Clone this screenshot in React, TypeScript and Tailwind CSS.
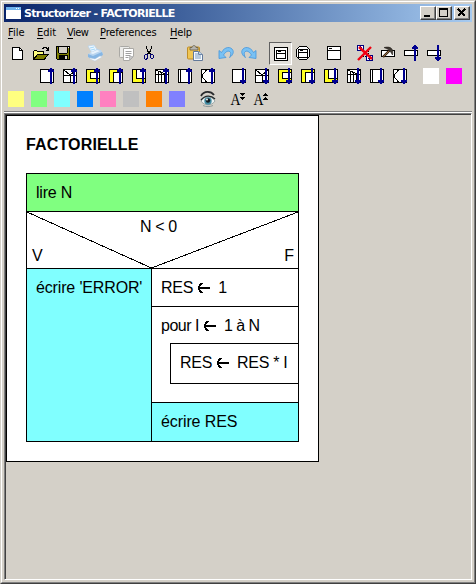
import React from "react";

function Icon({ children, crisp = true }: { children?: React.ReactNode; crisp?: boolean }) {
  return (
    <svg
      width="16"
      height="16"
      viewBox="0 0 16 16"
      fill="none"
      className="block shrink-0 overflow-visible"
      shapeRendering={crisp ? "crispEdges" : "auto"}
    >
      {children}
    </svg>
  );
}

const Gap = ({ children }: { children?: React.ReactNode }) => <span className="w-[8px] shrink-0">{children}</span>;
const Cells = ({ children }: { children: React.ReactNode }) => <div className="flex shrink-0 gap-[7px] pr-[7px]">{children}</div>;

function NewIcon() {
  return (
    <Icon>
      <path d="M2.500 2.500h7l3 3v9h-10z" fill="#fff" stroke="#000" />
      <path d="M9.500 2.500v3h3" stroke="#000" />
    </Icon>
  );
}

function OpenIcon() {
  return (
    <Icon>
      <path d="M.5 14V6.500l1-1h2l1 1h6v3" fill="#ffff80" stroke="#000" />
      <path d="M.5 14.500l4-5h11l-4.500 5z" fill="#808000" stroke="#000" />
      <path d="M9 3.500h1v-1h3v1h1v1h1M15.500 2v4M12.500 5.500h3" stroke="#000" />
    </Icon>
  );
}

function SaveIcon() {
  return (
    <Icon>
      <path d="M.5 1.500h13v13h-12l-1-1z" fill="#808000" stroke="#000" />
      <path d="M3 2h8v6H3z" fill="#d4d0c8" />
      <path d="M2.500 2v5.500l1 1h7l1-1V2" stroke="#000" />
      <path d="M3 10h9v4H3z" fill="#000" />
      <path d="M9 11h2v3H9z" fill="#d4d0c8" />
      <path d="M12 2h1v1h-1z" fill="#fff" />
    </Icon>
  );
}

function PrintIcon() {
  return (
    <Icon crisp={false}>
      <path d="M1 1l6-1 4 6-6 2z" fill="#eef7ff" stroke="#b5d3ec" strokeWidth=".7" />
      <path d="M3 3l4-1M4 5l4-1" stroke="#a1d8fa" />
      <path d="M1 9l9-5 4 1 2 4-9 5-6-2z" fill="#b9d5f0" />
      <path d="M1 9l5 2 9-4 1 3-9 5-6-3z" fill="#86b6e4" />
      <path d="M3 8l7-3 3 1-7 3z" fill="#e8f3fc" />
      <path d="M3 13l5 1 5-3 2 1-7 4-5-2z" fill="#fff" stroke="#b4cce4" strokeWidth=".5" />
    </Icon>
  );
}

function CopyIcon() {
  return (
    <Icon crisp={false}>
      <rect x="1.500" y="1.500" width="10" height="11" rx="1" fill="#ececea" stroke="#aaa9a5" />
      <path d="M5.500 3.500h10v8l-4 4h-6z" fill="#fff" stroke="#aaa9a5" />
      <path d="M7.500 6.500h6M7.500 8.500h6M7.500 10.500h5M7.500 12.500h3" stroke="#a0a0a0" />
      <path d="M15 11.500h-3.500V15z" fill="#ccc" stroke="#aaa" strokeWidth=".7" />
    </Icon>
  );
}

function CutIcon() {
  return (
    <Icon>
      <path d="M5 1h1v3H5zM6 4h1v3H6zM7 6h1v3H7zM10 1h1v3h-1zM9 4h1v3H9zM8 6h1v3H8z" fill="#000" />
      <path d="M6 8h1v1H6zM9 8h1v1H9z" fill="#000" />
      <path d="M4.500 9.500h2v4h-1v1h-1l-1-1v-3zM9.500 9.500h2l1 1v2l-1 1h-1l-1-1z" stroke="#000070" />
    </Icon>
  );
}

function PasteIcon() {
  return (
    <Icon crisp={false}>
      <rect x=".5" y="2" width="12" height="12" rx="1" fill="#f0c654" stroke="#c08e28" />
      <path d="M3 4V2.500h2C5 0 9 0 9 2.500h2V5H3z" fill="#b6b5b0" stroke="#665c45" strokeWidth=".8" />
      <path d="M6.500 6.500h5l4 3v6h-9z" fill="#f6faff" stroke="#62799a" />
      <path d="M8 9h3M8 11h6M8 13h6" stroke="#789bbd" />
      <path d="M11.500 6.500v3h4" fill="#bdd6ed" stroke="#6e86a7" />
    </Icon>
  );
}

function UndoIcon({ flip = false }: { flip?: boolean }) {
  return (
    <Icon crisp={false}>
      <path
        transform={flip ? "matrix(-1 0 0 1 16 0)" : undefined}
        d="M1 5.500v8l7-1-2.500-2.500C8 6 11 5 12.500 7.500c.7 1.500 0 3.500-1 5C14 11 16 8 15 5.500 13 1 6.500 1.500 3.500 7.500z"
        fill="#79c1f4"
        stroke="#4596db"
        strokeWidth=".8"
      />
    </Icon>
  );
}

function FrameIcon({ kind }: { kind: "boxed" | "rounded" | "plain" }) {
  if (kind === "plain")
    return (
      <Icon>
        <path d="M1.500 1.500h13v13h-13z" fill="#fff" stroke="#000" />
        <path d="M2 5.500h12M3 3.500h3" stroke="#000" />
      </Icon>
    );
  return (
    <Icon>
      {kind === "boxed" ? (
        <path d="M1.500 1.500h13v13h-13z" fill="#fff" stroke="#000" />
      ) : (
        <path d="M4.500 1.500h7l3 3v7l-3 3h-7l-3-3v-7z" fill="#fff" stroke="#000" />
      )}
      <path d="M3.500 4.500h9v8h-9z" stroke="#000" />
      <path d="M4 7.500h8M5 5.500h3" stroke="#000" />
    </Icon>
  );
}

function DeleteIcon() {
  return (
    <Icon>
      <path d="M.5.500h6v5h-6zM9.500 10.500h6v5h-6z" fill="#fff" stroke="#000080" />
      <path d="M2 2.500h3M3.500 1v4M11 13.500h3M12.500 11v4" stroke="#000080" />
      <path d="M4 11.500h5M11.500 6v4" stroke="#000" strokeDasharray="1 1" />
      <path d="M1 15L14 2M2 2l13 12" stroke="#f00010" strokeWidth="2.400" shapeRendering="auto" />
    </Icon>
  );
}

function HammerIcon() {
  return (
    <Icon>
      <path d="M1.500 5.500h13v6h-13z" fill="#fff" stroke="#000" />
      <path d="M3 12l7.500-7.500" stroke="#30200f" strokeWidth="2.400" shapeRendering="auto" />
      <path d="M3.500 11.500l6-6" stroke="#94683f" strokeWidth="1" shapeRendering="auto" />
      <path d="M4 2.500c4-.8 6-.4 7.500 1C13 5 13 7 12.500 10L11 7.500 8.500 4.500z" fill="#3d3831" stroke="#26221e" strokeWidth=".6" shapeRendering="auto" />
    </Icon>
  );
}

function Arrow({ up, x = 10 }: { up: boolean; x?: number }) {
  return (
    <g transform={up ? `translate(${x} 0)` : `matrix(1 0 0 -1 ${x} 16)`} fill="#000090">
      <path d="M0 0h2v16H0zM-1 1h4v1h-4zM-2 2h6v2h-6z" />
    </g>
  );
}

function MoveIcon({ up }: { up: boolean }) {
  return (
    <Icon>
      <path d="M1.500 5.500h13v5h-13z" fill="#fff" stroke="#000" />
      <Arrow up={up} x={11} />
    </Icon>
  );
}

type Kind = "inst" | "alt" | "for" | "while" | "repeat" | "case" | "call" | "jump";
const kinds: Kind[] = ["inst", "alt", "for", "while", "repeat", "case", "call", "jump"];

function StructureIcon({ kind, up }: { kind: Kind; up: boolean }) {
  const looped = kind === "for" || kind === "while" || kind === "repeat";
  return (
    <Icon>
      <path d="M.5 1.500h13v13H.5z" fill={looped ? "#ffff20" : "#fff"} stroke="#000" />
      {kind === "alt" && <path d="M1 2l6 5 6-5M1 7.500h12M7.500 7v7" stroke="#000" />}
      {kind === "for" && <path d="M4.500 4.500h9v6h-9z" fill="#fff" stroke="#000" />}
      {kind === "while" && <path d="M4.500 4.500h9v10h-9z" fill="#fff" stroke="#000" />}
      {kind === "repeat" && <path d="M4.500 1.500h9v9h-9z" fill="#fff" stroke="#000" />}
      {kind === "case" && <path d="M1 2l9 4 3-4M1 6.500h12M3.500 4v10M6.500 5v9M9.500 5v9" stroke="#000" />}
      {kind === "call" && <path d="M2.500 2v12M11.500 2v12" stroke="#000" />}
      {kind === "jump" && <path d="M5.500 2L1 7.500v1L5.500 14" stroke="#000" />}
      <Arrow up={up} />
    </Icon>
  );
}

function EyeIcon() {
  return (
    <Icon crisp={false}>
      <path d="M1 5C4-.5 11 0 14 4" stroke="#292b2d" strokeWidth="1.800" />
      <path d="M1 10c3-5 10-6 14 0-3 5-11 5-14 0z" fill="#edf2f2" stroke="#8c9899" strokeWidth=".8" />
      <path d="M1 9c4-5 10-5 14-1" stroke="#20282b" strokeWidth="1.300" />
      <circle cx="8" cy="10" r="3.700" fill="#438ca2" />
      <circle cx="8" cy="9.500" r="2.200" fill="#101a20" />
      <circle cx="7" cy="8.500" r=".9" fill="#fff" />
      <path d="M3 14.500c3 1.500 7 1.500 10 0" stroke="#8f9a9b" />
    </Icon>
  );
}

function FontIcon({ up }: { up: boolean }) {
  return (
    <Icon>
      <text x="-.5" y="14" fontSize="16" textLength="10" lengthAdjust="spacingAndGlyphs" fontFamily="'Liberation Serif', serif" fill="#000">A</text>
      <g transform={up ? "matrix(1 0 0 -1 0 11)" : undefined} fill="#000">
        <path d="M9 2h5v1H9zM10 3h3v1h-3zM11 4h1v1h-1zM9 6h5v1H9zM10 7h3v1h-3zM11 8h1v1h-1z" />
      </g>
    </Icon>
  );
}

function WindowButton({ children }: { children: React.ReactNode }) {
  return (
    <div className="h-[14px] w-4 border border-t-white border-r-[#404040] border-b-[#404040] border-l-white bg-[#d4d0c8] shadow-[inset_-1px_-1px_0_#808080]">
      <svg width="14" height="12" viewBox="0 0 14 12" className="block" shapeRendering="crispEdges" fill="none" stroke="#000">
        {children}
      </svg>
    </div>
  );
}

function MenuItem({ label, className }: { label: string; className: string }) {
  return (
    <span className={`shrink-0 whitespace-nowrap ${className}`}>
      <span className="underline decoration-1 underline-offset-2">{label[0]}</span>
      {label.slice(1)}
    </span>
  );
}

function Assign() {
  return (
    <svg width="13" height="12" viewBox="0 0 13 12" className="mr-[8px] ml-[4px] inline-block align-[-1px]" fill="none" shapeRendering="crispEdges">
      <path d="M1 6h12M5 1L2 4.500v3L5 11" stroke="#000" strokeWidth="2" />
    </svg>
  );
}

const palette = ["bg-[#ffff80]", "bg-[#80ff80]", "bg-[#80ffff]", "bg-[#0080ff]", "bg-[#ff80c0]", "bg-[#c0c0c0]", "bg-[#ff8000]", "bg-[#8080ff]"];

function Diagram() {
  return (
    <div className="h-[347px] w-[313px] border border-black bg-white pt-[20px] pl-[19px] font-['Liberation_Sans',Arial,sans-serif] text-[16px] leading-[18px] text-black">
      <div className="mb-[19px] h-[18px] font-bold tracking-[0.15px]">FACTORIELLE</div>
      <div className="flex h-[269px] w-[273px] flex-col border border-black">
        <div className="h-[38px] border-b border-black bg-[#80ff80] pt-[10px] pl-[9px] tracking-[-0.2px]">lire N</div>
        <div className="grid h-[57px] shrink-0 border-b border-black">
          <svg className="col-start-1 row-start-1" width="271" height="56" viewBox="0 0 271 56" shapeRendering="crispEdges">
            <path d="M0 0L124.500 56L271 0" fill="none" stroke="#000" />
          </svg>
          <div className="col-start-1 row-start-1 flex flex-col justify-between pt-[6px] pb-[3px]">
            <span className="pl-[113px] tracking-[-0.4px]">N &lt; 0</span>
            <div className="flex justify-between pr-[4px] pl-[5px]"><span>V</span><span>F</span></div>
          </div>
        </div>
        <div className="flex min-h-0 grow">
          <div className="w-[125px] shrink-0 border-r border-black bg-[#80ffff] pt-[10px] pl-[9px] tracking-[-0.15px] whitespace-nowrap">écrire 'ERROR'</div>
          <div className="flex grow flex-col whitespace-nowrap">
            <div className="h-[38px] border-b border-black pt-[10px] pl-[9px] tracking-[-0.2px]">RES<Assign />1</div>
            <div className="h-[96px] border-b border-black pt-[10px]">
              <div className="h-[26px] pl-[9px] tracking-[-0.5px]">pour I<Assign />1 à N</div>
              <div className="ml-[18px] h-[41px] border-y border-l border-black pt-[10px] pl-[9px] tracking-[-0.3px]">RES<Assign />RES * I</div>
            </div>
            <div className="grow bg-[#80ffff] pt-[10px] pl-[9px] tracking-[-0.1px]">écrire RES</div>
          </div>
        </div>
      </div>
    </div>
  );
}

export default function App() {
  return (
    <div className="h-[584px] w-[476px] overflow-hidden border border-t-[#d4d0c8] border-r-[#404040] border-b-[#404040] border-l-[#d4d0c8] bg-[#d4d0c8] font-['DejaVu_Sans_Condensed','DejaVu_Sans',sans-serif]">
      <div className="flex h-full flex-col border border-t-white border-r-[#808080] border-b-[#808080] border-l-white p-[2px]">
        <header className="flex h-[18px] shrink-0 items-center bg-linear-to-r from-[#0a246a] to-[#a6caf0] pr-[2px] pl-[2px]">
          <svg width="16" height="14" viewBox="0 0 16 14" className="mr-[2px]" shapeRendering="crispEdges">
            <path d="M0 1h15v12H0z" fill="#fff" />
            <path d="M0 1h15v3H0z" fill="#70b4ed" />
            <path d="M10 2h1v1h-1zM12 2h1v1h-1z" fill="#fff" />
          </svg>
          <h1 className="w-[160px] pt-px font-['DejaVu_Sans',sans-serif] text-[11px] leading-[17px] font-bold tracking-[-0.66px] whitespace-nowrap text-white">Structorizer - FACTORIELLE</h1>
          <div className="ml-auto flex">
            <WindowButton><path d="M3 9h6" strokeWidth="2" /></WindowButton>
            <WindowButton><path d="M2.500 2v7.500h8V2" /><path d="M2 2h9" strokeWidth="2" /></WindowButton>
            <span className="w-[2px]" />
            <WindowButton><path d="M3 2l7 7M10 2l-7 7" strokeWidth="1.700" /></WindowButton>
          </div>
        </header>
        <nav className="flex h-[20px] shrink-0 pt-px pl-[4px] text-[11px] leading-[20px] text-black">
          <MenuItem label="File" className="w-[29px]" />
          <MenuItem label="Edit" className="w-[30px]" />
          <MenuItem label="View" className="w-[33px] tracking-[-0.5px]" />
          <MenuItem label="Preferences" className="w-[70px] tracking-[-0.15px]" />
          <MenuItem label="Help" className="w-[30px] tracking-[-0.2px]" />
        </nav>
        <div className="flex h-[23px] shrink-0 items-start pt-[3px] pl-[6px]">
          <Cells><NewIcon /><OpenIcon /><SaveIcon /></Cells>
          <Gap />
          <Cells><PrintIcon /></Cells>
          <Gap />
          <Cells><CopyIcon /><CutIcon /><Icon /><PasteIcon /></Cells>
          <Gap />
          <Cells><UndoIcon /><UndoIcon flip /></Cells>
          <Gap />
          <div className="-mt-[3px] -ml-[3px] mr-[3px] h-[23px] w-[23px] shrink-0 border border-t-[#606060] border-r-white border-b-white border-l-[#606060] bg-[#e3e0db] pt-[3px] pl-[3px]">
            <FrameIcon kind="boxed" />
          </div>
          <Cells><FrameIcon kind="rounded" /></Cells>
          <Gap />
          <Cells><FrameIcon kind="plain" /></Cells>
          <Gap />
          <Cells><DeleteIcon /><HammerIcon /><MoveIcon up /><MoveIcon up={false} /></Cells>
        </div>
        <div className="flex h-[23px] shrink-0 items-start pt-[3px] pl-[36px]">
          <Cells>{kinds.map((kind) => <StructureIcon key={kind} kind={kind} up />)}</Cells>
          <Gap />
          <Cells>{kinds.map((kind) => <StructureIcon key={kind} kind={kind} up={false} />)}</Cells>
          <Gap />
          <div className="-ml-px flex gap-[7px]">
            <span className="size-4 bg-white" />
            <span className="size-4 bg-[#ff00ff]" />
          </div>
        </div>
        <div className="flex h-[23px] shrink-0 items-start pt-[3px] pl-[4px]">
          <Cells>{palette.map((color) => <span key={color} className={`size-4 ${color}`} />)}</Cells>
          <Gap />
          <Cells><EyeIcon /></Cells>
          <Gap />
          <Cells><FontIcon up={false} /><FontIcon up /></Cells>
        </div>
        <main className="flex min-h-0 grow flex-col border-t border-[#808080]">
          <div className="min-h-0 grow border-t border-t-white">
            <div className="h-[467px] w-[468px] border border-t-[#808080] border-r-white border-b-white border-l-[#808080]">
              <div className="h-full border-t border-l border-[#404040]">
                <Diagram />
              </div>
            </div>
          </div>
        </main>
      </div>
    </div>
  );
}
